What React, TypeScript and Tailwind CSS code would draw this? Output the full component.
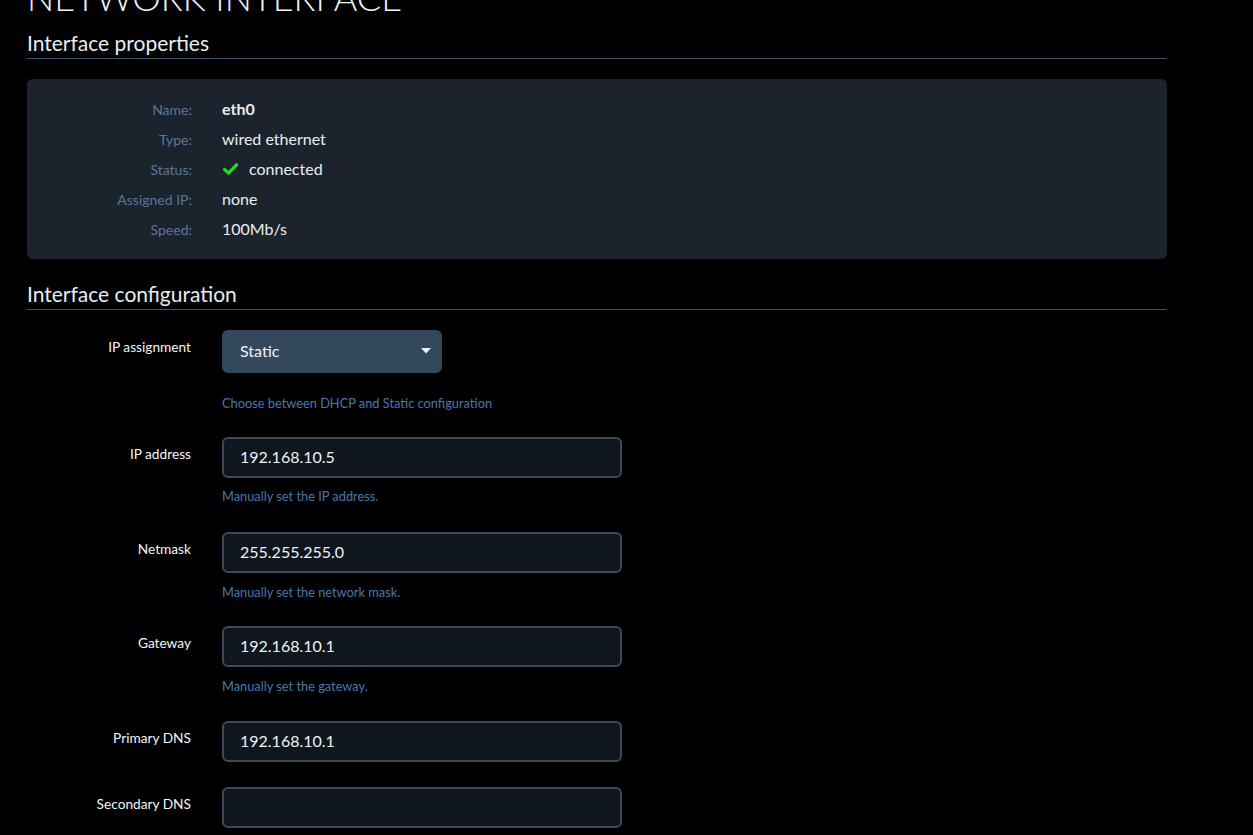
import React from "react";

const font = { fontFamily: "Lato, 'Open Sans', sans-serif" };

function PropRow({ label, children }: { label: string; children: React.ReactNode }) {
  return (
    <div className="grid grid-cols-[165px_1fr] gap-x-[30px] h-[30px] items-center">
      <div className="text-right text-[14px] text-[#5b7699]">{label}</div>
      <div className="text-[16px] text-[#e9eef3] flex items-center">{children}</div>
    </div>
  );
}

function FormRow({
  label,
  children,
  help,
  helpMt = "mt-[11px]",
  mb = "mb-[27px]",
}: {
  label: string;
  children: React.ReactNode;
  help?: string;
  helpMt?: string;
  mb?: string;
}) {
  return (
    <div className={`grid grid-cols-[164px_1fr] gap-x-[31px] ${mb}`}>
      <div className="text-right text-[13.7px] leading-[16px] pt-[9px] text-[#f2f5f8]">{label}</div>
      <div>
        {children}
        {help && (
          <div className={`${helpMt} text-[12.8px] leading-[16px] text-[#4a78ae]`}>{help}</div>
        )}
      </div>
    </div>
  );
}

function TextInput({ value }: { value: string }) {
  return (
    <div className="w-[400px] h-[41px] rounded-md border-2 border-[#3a4b5c] bg-[#10161e] flex items-center pl-[16px] text-[16px] text-[#eef2f6]">
      {value}
    </div>
  );
}

export default function App() {
  return (
    <div className="min-h-[835px] w-full bg-black overflow-hidden" style={font}>
      <div className="pl-[27px] w-[1167px]">
        <div className="mt-[-24px] text-[36px] leading-[43px] font-light text-[#eef3f7]">
          NETWORK INTERFACE
        </div>
        <div className="mt-[11px] text-[21px] leading-[26px] pb-[2px] border-b border-[#3d4f6b] text-[#e6edf3]">
          Interface properties
        </div>
        <div className="mt-[20px] rounded-md bg-[#1b232d] py-[15px]">
          <PropRow label="Name:">
            <span className="font-bold">eth0</span>
          </PropRow>
          <PropRow label="Type:">wired ethernet</PropRow>
          <PropRow label="Status:">
            <svg width="15" height="12" viewBox="0 0 15 12" className="ml-[1px] mr-[11px]">
              <path d="M1.5 6.5 L5.5 10.2 L13.5 1.8" fill="none" stroke="#22dd22" strokeWidth="3.2" strokeLinecap="round" strokeLinejoin="round" />
            </svg>
            connected
          </PropRow>
          <PropRow label="Assigned IP:">none</PropRow>
          <PropRow label="Speed:">100Mb/s</PropRow>
        </div>
        <div className="mt-[21.5px] text-[21px] leading-[26px] pb-[2px] border-b border-[#3d4f6b] text-[#e6edf3]">
          Interface configuration
        </div>
        <div className="mt-[20px]">
          <FormRow
            label="IP assignment"
            help="Choose between DHCP and Static configuration"
            helpMt="mt-[22px]"
            mb="mb-[26px]"
          >
            <div className="w-[220px] h-[43px] rounded-md bg-[#34485c] flex items-center justify-between pl-[18px] pr-[11px] text-[16px] text-[#eef2f6]">
              <span>Static</span>
              <svg width="10" height="6" viewBox="0 0 10 6">
                <path d="M0 0 L10 0 L5 5.5 Z" fill="#e8edf2" />
              </svg>
            </div>
          </FormRow>
          <FormRow label="IP address" help="Manually set the IP address." helpMt="mt-[10px]" mb="mb-[28px]">
            <TextInput value="192.168.10.5" />
          </FormRow>
          <FormRow label="Netmask" help="Manually set the network mask." mb="mb-[26px]">
            <TextInput value="255.255.255.0" />
          </FormRow>
          <FormRow label="Gateway" help="Manually set the gateway." mb="mb-[27px]">
            <TextInput value="192.168.10.1" />
          </FormRow>
          <FormRow label="Primary DNS" mb="mb-[25px]">
            <TextInput value="192.168.10.1" />
          </FormRow>
          <FormRow label="Secondary DNS">
            <TextInput value="" />
          </FormRow>
        </div>
      </div>
    </div>
  );
}
